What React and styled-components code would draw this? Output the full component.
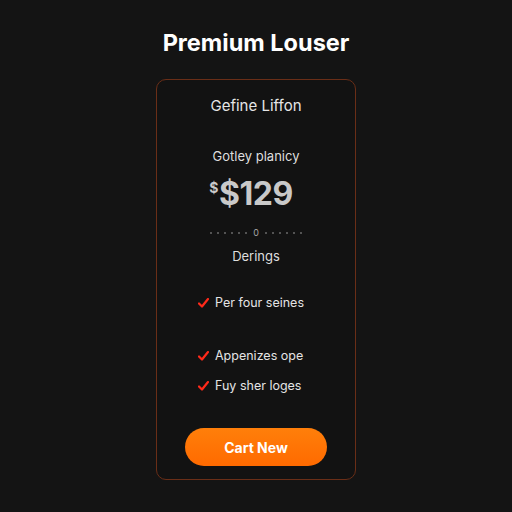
import React from 'react';
import styled, { createGlobalStyle } from 'styled-components';

const GlobalStyle = createGlobalStyle`
  html, body {
    margin: 0;
    padding: 0;
    background: #141414;
  }
  body {
    font-family: Inter, "Noto Sans", sans-serif;
    color: #eeeeee;
  }
`;

const Page = styled.div`
  width: 512px;
  height: 512px;
  display: flex;
  flex-direction: column;
  align-items: center;
  background: #141414;
`;

const Title = styled.h1`
  margin: 29px 0 0;
  font-size: 23.5px;
  line-height: 28px;
  font-weight: 700;
  color: #ffffff;
`;

const Card = styled.div`
  box-sizing: border-box;
  margin-top: 22px;
  width: 200px;
  height: 401px;
  border: 1px solid #6a2e17;
  border-radius: 10px;
  background: #121212;
  display: flex;
  flex-direction: column;
  align-items: center;
  padding-top: 17px;
`;

const PlanName = styled.div`
  font-size: 15px;
  line-height: 18px;
  color: #e6e6e6;
`;

const Label = styled.div`
  margin-top: ${p => p.$top}px;
  font-size: 13px;
  line-height: 18px;
  color: #dedede;
`;

const Price = styled.div`
  margin-top: 11px;
  padding-right: 10px;
  display: flex;
  align-items: flex-start;
  font-size: 32px;
  line-height: 36px;
  font-weight: 700;
  color: #c9c9c9;
  letter-spacing: -0.5px;
`;

const Sup = styled.span`
  font-size: 14px;
  line-height: 20px;
  margin-top: 2px;
  margin-right: 1px;
`;

const Dots = styled.div`
  margin-top: 16px;
  height: 10px;
  display: flex;
  align-items: center;
  gap: 5px;
`;

const Dot = styled.span`
  width: 2px;
  height: 2px;
  border-radius: 50%;
  background: #6a6a6a;
`;

const Knob = styled.span`
  font-size: 9px;
  line-height: 10px;
  color: #a5a5a5;
  margin: 0 1px;
`;

const Features = styled.ul`
  list-style: none;
  margin: 29px 0 0;
  padding: 0 0 0 41px;
  align-self: stretch;
`;

const Feature = styled.li`
  margin-top: ${p => p.$top}px;
  display: flex;
  align-items: center;
  gap: 6px;
  font-size: 12.5px;
  line-height: 18px;
  color: #e4e4e4;
`;

const Button = styled.button`
  margin-top: 33px;
  width: 142px;
  height: 38px;
  border: none;
  border-radius: 19px;
  background: linear-gradient(180deg, #ff7f0a 0%, #ff6a00 100%);
  color: #ffffff;
  font-family: Inter, "Noto Sans", sans-serif;
  font-size: 14px;
  font-weight: 700;
  cursor: pointer;
`;

const Check = () => (
  <svg width="11" height="10" viewBox="0 0 11 10">
    <path d="M1 5.5 L4 8.5 L10 1" fill="none" stroke="#ff2a1a" strokeWidth="2.2" strokeLinecap="round" strokeLinejoin="round" />
  </svg>
);

const features = [
  { text: 'Per four seines', top: 0 },
  { text: 'Appenizes ope', top: 35 },
  { text: 'Fuy sher loges', top: 12 },
];

const App = () => (
  <Page>
    <GlobalStyle />
    <Title>Premium Louser</Title>
    <Card>
      <PlanName>Gefine Liffon</PlanName>
      <Label $top={32}>Gotley planicy</Label>
      <Price><Sup>$</Sup>$129</Price>
      <Dots>
        {[0, 1, 2, 3, 4, 5].map(i => <Dot key={'l' + i} />)}
        <Knob>0</Knob>
        {[0, 1, 2, 3, 4, 5].map(i => <Dot key={'r' + i} />)}
      </Dots>
      <Label $top={9}>Derings</Label>
      <Features>
        {features.map(f => (
          <Feature key={f.text} $top={f.top}>
            <Check />
            {f.text}
          </Feature>
        ))}
      </Features>
      <Button>Cart New</Button>
    </Card>
  </Page>
);

export default App;
